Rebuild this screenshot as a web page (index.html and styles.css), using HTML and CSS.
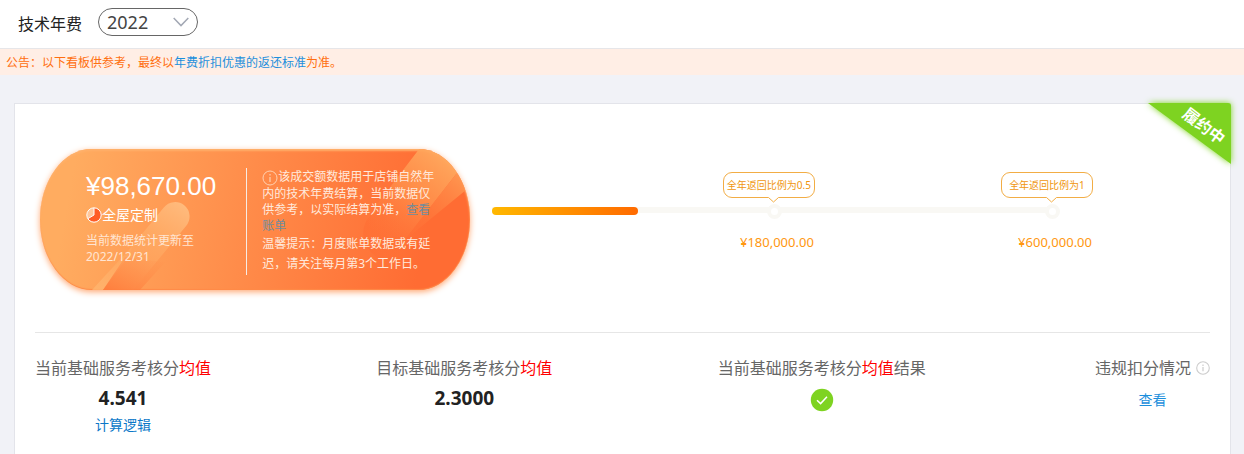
FILE: index.html
```html
<!DOCTYPE html>
<html lang="zh-CN">
<head>
<meta charset="utf-8">
<meta name="viewport" content="width=device-width, initial-scale=1">
<title>技术年费</title>
<link rel="stylesheet" href="styles.css">
</head>
<body>
<header class="topbar">
  <label class="topbar-title" for="year">技术年费</label>
  <div class="year-picker">
    <select id="year" class="year-select"><option>2022</option></select>
    <svg class="year-arrow" width="16" height="10" viewBox="0 0 16 10" aria-hidden="true"><path d="M.7 1 8 8.6 15.3 1" fill="none" stroke="#a3a8b4" stroke-width="1.5"/></svg>
  </div>
</header>
<p class="notice">公告：以下看板供参考，最终以<a class="link" href="#">年费折扣优惠的返还标准</a>为准。</p>
<main class="card">
  <div class="ribbon">
    <svg class="ribbon-shape" width="83" height="61" viewBox="0 0 83 61" aria-hidden="true"><path d="M0 0H80Q83 0 83 3V61Z" fill="#7ed321"/></svg>
    <span class="ribbon-text">履约中</span>
  </div>
  <section class="overview">
    <div class="banner">
      <svg class="banner-art" viewBox="0 0 430 142" preserveAspectRatio="none" aria-hidden="true">
        <defs>
          <linearGradient id="capsule" gradientUnits="userSpaceOnUse" x1="140" y1="55" x2="85" y2="142"><stop offset="0" stop-color="#ffba7c"/><stop offset=".45" stop-color="#ffac66" stop-opacity=".7"/><stop offset="1" stop-color="#ffa45c" stop-opacity=".15"/></linearGradient>
          <linearGradient id="streak" gradientUnits="userSpaceOnUse" x1="100" y1="90" x2="60" y2="142"><stop offset="0" stop-color="#ffb169" stop-opacity=".1"/><stop offset="1" stop-color="#ffb56f" stop-opacity=".8"/></linearGradient>
          <linearGradient id="fold" x1="0" y1="1" x2="1" y2="0"><stop offset="0" stop-color="#ff7d3c"/><stop offset="1" stop-color="#ff8d4b" stop-opacity="0"/></linearGradient>
          <linearGradient id="beam" gradientUnits="userSpaceOnUse" x1="415" y1="8" x2="345" y2="92"><stop offset="0" stop-color="#ffab60"/><stop offset=".5" stop-color="#ff9850" stop-opacity=".7"/><stop offset="1" stop-color="#ff7a3c" stop-opacity="0"/></linearGradient>
          <linearGradient id="beam2" gradientUnits="userSpaceOnUse" x1="425" y1="30" x2="365" y2="98"><stop offset="0" stop-color="#ff9650"/><stop offset="1" stop-color="#ff7135" stop-opacity="0"/></linearGradient>
          <linearGradient id="disc" x1="0" y1="0" x2="1" y2="0"><stop offset="0" stop-color="#ff6a31" stop-opacity=".45"/><stop offset=".7" stop-color="#ff6b30" stop-opacity="0"/></linearGradient>
        </defs>
        <path d="M135 68 68 150" stroke="url(#capsule)" stroke-width="29" stroke-linecap="round"/>
        <path d="M92 98 52 142H63L90 106Z" fill="url(#streak)"/>
        <path d="M85 109 63 142H100L125 114Z" fill="url(#fold)"/>
        <circle cx="350" cy="85" r="27" fill="url(#disc)"/>
        <path d="M379 0H430V10L417 24 350 110 323 74Z" fill="url(#beam)"/>
        <path d="M417 24 430 38 369 88 350 110Z" fill="url(#beam2)"/>
      </svg>
      <div class="deal">
        <div class="amount">¥98,670.00</div>
        <div class="category">
          <svg width="16" height="16" viewBox="0 0 16 16" aria-hidden="true"><circle cx="8" cy="8" r="7" fill="#ffc79d"/><path d="M8 8V1A7 7 0 1 1 2 11.6Z" fill="#ff5c26"/><circle cx="8" cy="8" r="7.2" fill="none" stroke="#fff" stroke-width="1"/><path d="M8 1V8L2 11.6" fill="none" stroke="#fff" stroke-width="1"/></svg>
          <span>全屋定制</span>
        </div>
        <div class="updated">当前数据统计更新至<br>2022/12/31</div>
      </div>
      <div class="tips">
        <p class="tip"><svg class="tip-icon" width="16" height="16" viewBox="0 0 16 16" aria-hidden="true"><circle cx="8" cy="8" r="7" fill="none" stroke="#ffd0b0"/><path d="M8 7V12M8 4V5.5" stroke="#ffd0b0" stroke-width="1.2"/></svg>该成交额数据用于店铺自然年内的技术年费结算，当前数据仅供参考，以实际结算为准，<a class="bill-link" href="#">查看账单</a></p>
        <p class="tip tip-loose">温馨提示：月度账单数据或有延迟，请关注每月第3个工作日。</p>
      </div>
    </div>
    <div class="timeline">
      <div class="track"><div class="track-fill"></div></div>
      <div class="milestones">
        <div class="milestone">
          <div class="bubble">全年返回比例为0.5<svg class="bubble-tip" width="11" height="6" viewBox="0 0 11 6" aria-hidden="true"><path d="M0 0H11L5.5 5Z" fill="#fff"/><path d="M.5 .5 5.5 5 10.5 .5" fill="none" stroke="#f2ad45"/></svg></div>
          <span class="dot"></span>
          <span class="goal">¥180,000.00</span>
        </div>
        <div class="milestone">
          <div class="bubble">全年返回比例为1<svg class="bubble-tip" width="11" height="6" viewBox="0 0 11 6" aria-hidden="true"><path d="M0 0H11L5.5 5Z" fill="#fff"/><path d="M.5 .5 5.5 5 10.5 .5" fill="none" stroke="#f2ad45"/></svg></div>
          <span class="dot"></span>
          <span class="goal">¥600,000.00</span>
        </div>
      </div>
    </div>
  </section>
  <section class="stats">
    <div class="stat">
      <h2 class="stat-name">当前基础服务考核分<em>均值</em></h2>
      <strong class="stat-value">4.541</strong>
      <a class="stat-link stat-link-dark" href="#">计算逻辑</a>
    </div>
    <div class="stat">
      <h2 class="stat-name">目标基础服务考核分<em>均值</em></h2>
      <strong class="stat-value">2.3000</strong>
    </div>
    <div class="stat">
      <h2 class="stat-name">当前基础服务考核分<em>均值</em>结果</h2>
      <svg class="stat-check" width="24" height="24" viewBox="0 0 24 24" role="img" aria-label="达标"><circle cx="12" cy="12" r="11.2" fill="#7ed321"/><path d="M7 12.2 10.6 15.6 17 8.8" fill="none" stroke="#fff" stroke-width="1.5"/></svg>
    </div>
    <div class="stat">
      <h2 class="stat-name">违规扣分情况<svg class="stat-info" width="14" height="14" viewBox="0 0 14 14" aria-hidden="true"><circle cx="7" cy="7" r="6.3" fill="none" stroke="#ccc" stroke-width="1.1"/><path d="M7 6V10.3M7 3.6V4.9" stroke="#ccc" stroke-width="1.2"/></svg></h2>
      <a class="stat-link" href="#">查看</a>
    </div>
  </section>
</main>
</body>
</html>
```

FILE: styles.css
```css
* {
  box-sizing: border-box;
}

body {
  display: flex;
  flex-direction: column;
  min-height: 100vh;
  margin: 0;
  background: #f1f2f7;
  color: #222;
  font-family: "Noto Sans", "Noto Sans CJK SC", sans-serif;
  font-size: 12px;
}

h2,
p {
  margin: 0;
  font-weight: 400;
}

a {
  color: #1c8fdc;
  text-decoration: none;
}

.topbar {
  display: flex;
  align-items: flex-start;
  gap: 16px;
  padding: 8px 18px 12px;
  border-bottom: 1px solid #e6e6e9;
  background: #fff;
}

.topbar-title {
  padding-top: 4px;
  font-size: 16px;
  line-height: 24px;
}

.year-picker {
  position: relative;
}

.year-select {
  display: block;
  width: 100px;
  height: 28px;
  padding: 0 28px 0 8px;
  border: 1px solid #666;
  border-radius: 14px;
  appearance: none;
  background: #fff;
  color: #444;
  font-family: inherit;
  font-size: 18px;
  line-height: 24px;
}

.year-arrow {
  position: absolute;
  top: 9px;
  right: 9px;
  pointer-events: none;
}

.notice {
  padding: 5px 6px 3px;
  background: #ffeee5;
  color: #ff6f0f;
  line-height: 18px;
}

.card {
  position: relative;
  flex: 1;
  margin: 28px 13px 0 14px;
  padding: 45px 20px 16px;
  border: 1px solid #e3e4ea;
  border-bottom: 0;
  background: #fff;
}

.ribbon {
  position: absolute;
  top: -1px;
  right: -1px;
}

.ribbon-shape {
  display: block;
  overflow: visible;
  filter: drop-shadow(0 0 3px #7ed321);
}

.ribbon-text {
  position: absolute;
  top: 11px;
  right: 3px;
  color: #fff;
  font-size: 16px;
  font-weight: 700;
  line-height: 24px;
  white-space: nowrap;
  transform: rotate(37deg);
}

.overview {
  display: flex;
  align-items: flex-start;
  padding: 0 117px 42px 5px;
  border-bottom: 1px solid #e6e6e6;
}

.banner {
  position: relative;
  display: flex;
  flex: none;
  gap: 30px;
  overflow: hidden;
  padding: 19px 34px 15px 46px;
  border-radius: 52px / 71px;
  background: linear-gradient(100deg, #ffac60 8%, #ff8c4a 48%, #ff6c33 88%);
  box-shadow: 0 2px 6px #ffa873, inset 0 2px 2px #ffb06a, inset 0 -1px 1px #ff8a48;
  color: #fff;
}

.banner-art {
  position: absolute;
  inset: 0;
  width: 100%;
  height: 100%;
}

.deal,
.tips {
  position: relative;
}

.amount {
  font-family: "Liberation Sans", Arial, sans-serif;
  font-size: 26px;
  line-height: 36px;
}

.category {
  display: flex;
  align-items: center;
  padding: 1px 0 8px;
  font-size: 14px;
  line-height: 20px;
}

.updated {
  color: #ffe5d2;
  line-height: 16px;
}

.tips {
  width: 190px;
  padding: 0 0 1px 15px;
  border-left: 1px solid #f7ece5;
  color: #ffe9dc;
}

.tip {
  line-height: 16px;
}

.tip-loose {
  line-height: 20px;
}

.tip-icon {
  margin-top: 2px;
  vertical-align: -5px;
}

.bill-link {
  color: #6f8c9c;
}

.timeline {
  position: relative;
  flex: 1;
  margin: 23px 0 0 22px;
}

.track {
  position: absolute;
  top: 35px;
  right: 40px;
  left: 0;
  height: 6px;
  background: #f9f8f4;
}

.track-fill {
  width: 26%;
  height: 8px;
  border-radius: 4px;
  background: linear-gradient(90deg, #ffb800, #ff6a00);
}

.milestones {
  position: relative;
  display: flex;
  justify-content: space-between;
  padding-left: 38.4%;
}

.milestone {
  display: flex;
  flex-direction: column;
  width: 92px;
}

.bubble {
  position: relative;
  border: 1px solid #f2ad45;
  border-radius: 9px;
  background: #fff;
  color: #f0960f;
  font-size: 10px;
  line-height: 24px;
  text-align: center;
  white-space: nowrap;
}

.bubble-tip {
  position: absolute;
  top: 24px;
  left: 44px;
}

.dot {
  width: 15px;
  height: 15px;
  margin: 6px 0 13px 44px;
  border: 4px solid #f9f8f4;
  border-radius: 50%;
  background: #fff;
}

.goal {
  padding-right: 1px;
  color: #ff9710;
  font-size: 13px;
  line-height: 20px;
  text-align: right;
}

.stats {
  display: flex;
  justify-content: space-between;
  padding-top: 23px;
}

.stat {
  display: flex;
  flex-direction: column;
  align-items: center;
}

.stat:last-child {
  margin-left: 4px;
}

.stat-name {
  display: flex;
  align-items: center;
  color: #666;
  font-size: 16px;
  line-height: 24px;
}

.stat-name em {
  color: #f00;
  font-style: normal;
}

.stat-value {
  padding-top: 6px;
  font-size: 19px;
  line-height: 24px;
}

.stat-link {
  padding-top: 10px;
  font-size: 14px;
  line-height: 20px;
}

.stat-value + .stat-link {
  padding-top: 5px;
}

.stat-link-dark {
  color: #0b78c8;
}

.stat-check {
  margin-top: 8px;
}

.stat-info {
  margin-left: 5px;
}
```
